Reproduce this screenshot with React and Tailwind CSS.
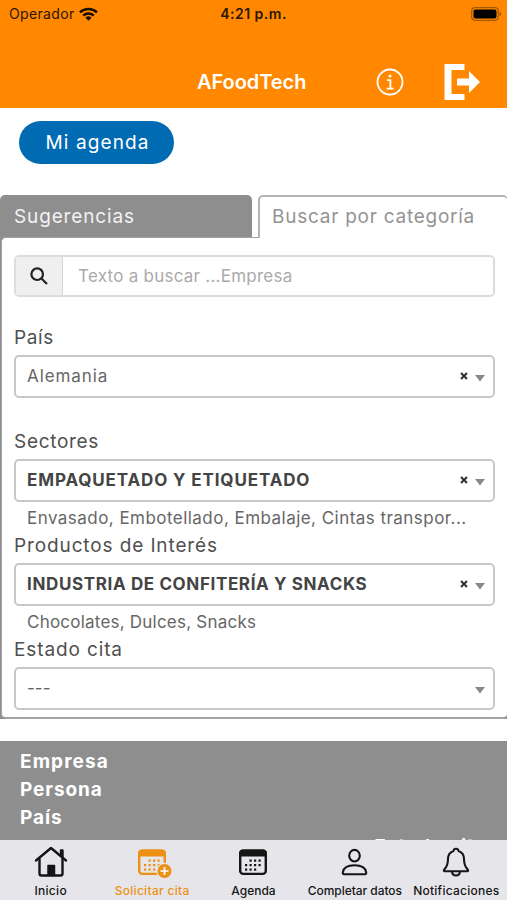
import React, { useState } from 'react';
import clsx from 'clsx';

const HomeIcon = () => (
  <svg width="34" height="32" viewBox="0 0 34 32" fill="none" stroke="currentColor" strokeWidth="2.4" strokeLinecap="round" strokeLinejoin="round">
    <path d="M2 14.5 17 2l15 12.5" />
    <path d="M27 9V4.5h1.500V11" />
    <path d="M5.500 13v14.500a2 2 0 0 0 2 2h19a2 2 0 0 0 2-2V13" />
    <path d="M14 29V19.500h6.500V29z" fill="currentColor" strokeWidth="1.500" />
  </svg>
);

const CalendarIcon = ({ plus }) => (
  <svg className="overflow-visible" width="36" height="32" viewBox="0 0 36 32" fill="none">
    <rect x="5.200" y="4.700" width="25.600" height="23.200" rx="3" stroke="currentColor" strokeWidth="2.400" />
    <path d="M4 10.500V7.500a4 4 0 0 1 4-4h20a4 4 0 0 1 4 4v3z" fill="currentColor" />
    <g fill="currentColor">
      {[14, 18.5, 23].map((y) =>
        [10, 14.5, 19, 23.5].map((x) =>
          (y === 14 && x === 10) || (y === 23 && x === 23.5) ? null : (
            <rect key={`${x}-${y}`} x={x} y={y - 0.5} width="2.200" height="2.200" />
          )
        )
      )}
    </g>
    {plus && (
      <g>
        <circle cx="30.500" cy="25" r="8.200" className="fill-[#e6e5ea]" />
        <circle cx="30.500" cy="25" r="7" fill="currentColor" />
        <path d="M30.500 21v8M26.500 25h8" stroke="#fff" strokeWidth="1.700" />
      </g>
    )}
  </svg>
);

const UserIcon = () => (
  <svg width="28" height="32" viewBox="0 0 28 32" fill="none" stroke="currentColor" strokeWidth="2.100">
    <ellipse cx="13.500" cy="9.700" rx="5.300" ry="5.800" />
    <path d="M3.500 28.300c-1.200 0-1.900-.8-1.700-2C2.500 22 7 19.300 13.500 19.300S24.500 22 25.200 26.300c.2 1.200-.5 2-1.700 2z" />
  </svg>
);

const BellIcon = () => (
  <svg width="30" height="32" viewBox="0 0 30 32" fill="none" stroke="currentColor" strokeWidth="2.100" strokeLinejoin="round">
    <path d="M15 2.800c-1.500 0-2.300.8-2.500 2.100C8.800 6.200 7 9.200 7 13c0 6-1.200 8-3.700 10.500-.9 1-.4 1.800.7 1.800h22c1.100 0 1.600-.8.700-1.800C24.200 21 23 19 23 13c0-3.800-1.800-6.800-5.500-8.100-.2-1.300-1-2.100-2.500-2.100z" />
    <path d="M11 25.500c.2 2.500 1.800 4 4 4s3.800-1.500 4-4" />
  </svg>
);

const NAV_ITEMS = [
  { id: 'inicio', label: 'Inicio', icon: <HomeIcon />, labelClass: 'tracking-[0.3px]' },
  { id: 'solicitar', label: 'Solicitar cita', icon: <CalendarIcon plus />, labelClass: 'tracking-[0.3px]' },
  { id: 'agenda', label: 'Agenda', icon: <CalendarIcon /> },
  { id: 'datos', label: 'Completar datos', icon: <UserIcon />, labelClass: 'tracking-[-0.05px]' },
  { id: 'notificaciones', label: 'Notificaciones', icon: <BellIcon />, labelClass: 'tracking-[0.25px]' },
];

const StatusBar = () => (
  <div className="grid h-7 grid-cols-3 items-center px-[9px] text-sm text-[#2b1700]">
    <div className="flex items-center gap-1">
      <span className="tracking-[0.35px]">Operador</span>
      <svg width="19" height="14" viewBox="0 0 19 14" fill="none" stroke="#1a0e00" strokeWidth="2.500">
        <path d="M1 5.300a12.300 12.300 0 0 1 17 0" />
        <path d="M4.200 8.600a7.700 7.700 0 0 1 10.600 0" />
        <path d="M9.500 13.800 6.500 10.800a4.300 4.300 0 0 1 6 0z" fill="#1a0e00" stroke="none" />
      </svg>
    </div>
    <span className="text-center font-semibold tracking-[0.5px]">4:21 p.m.</span>
    <div className="-mr-1 flex justify-end">
      <svg width="31" height="14" viewBox="0 0 31 14">
        <rect x="0.700" y="0.700" width="26.600" height="12.600" rx="3.500" fill="none" stroke="#a35700" strokeWidth="1.200" />
        <rect x="2.500" y="2.500" width="23" height="9" rx="2" fill="#000" />
        <path d="M28.600 4.800v4.400q1.600-.5 1.600-2.200t-1.600-2.200z" fill="#a35700" />
      </svg>
    </div>
  </div>
);

const Header = () => (
  <header className="h-[108px] shrink-0 bg-[#ff8800]">
    <StatusBar />
    <div className="flex h-20 items-center pt-[27px] pl-[197px]">
      <h1 className="w-[179px] text-[20px] font-semibold tracking-[-0.05px] text-white">AFoodTech</h1>
      <svg width="28" height="28" viewBox="0 0 28 28" fill="none" stroke="#fff">
        <circle cx="14" cy="14" r="12.500" strokeWidth="1.800" />
        <circle cx="14" cy="8" r="1.600" fill="#fff" stroke="none" />
        <path d="M11 12.200h3.400v8.300M10.700 20.700h7" strokeWidth="1.800" />
      </svg>
      <svg className="ml-10" width="37" height="36" viewBox="0 0 37 36" fill="#fff">
        <path d="M.5 0h20v6h-13v24h13v6h-20z" />
        <path d="M13 14.500h12V7l11 11L25 29v-7.500H13z" />
      </svg>
    </div>
  </header>
);

const SelectField = ({ label, labelClass, value, valueClass, detail, detailClass, clearable = true }) => (
  <div className="flex flex-col">
    <label className={clsx('mb-1 h-7 text-[19px] leading-[30px] text-[#505050]', labelClass)}>{label}</label>
    <div className="flex h-[43px] items-center rounded-[5px] border-2 border-[#c8c8c8] bg-white pr-2 pl-[11px]">
      <span className={clsx('flex-1 whitespace-nowrap', valueClass)}>{value}</span>
      {clearable && (
        <svg className="mr-[7px] mb-0.5" width="8" height="8" viewBox="0 0 8 8" stroke="#333" strokeWidth="2.100">
          <path d="m1 1 6 6M7 1 1 7" />
        </svg>
      )}
      <svg className="mt-1" width="10" height="7" viewBox="0 0 10 7" fill="#888">
        <path d="M0 0h10L5 6.500z" />
      </svg>
    </div>
    {detail !== undefined && (
      <p className={clsx('h-[29px] pl-[13px] text-[17px] leading-[32px] whitespace-nowrap text-[#666]', detailClass)}>
        {detail}
      </p>
    )}
  </div>
);

const BottomNav = ({ active, onChange }) => (
  <nav className="grid h-[60px] shrink-0 grid-cols-5 bg-[#e6e5ea]">
    {NAV_ITEMS.map((item) => (
      <button
        key={item.id}
        onClick={() => onChange(item.id)}
        className={clsx(
          'flex flex-col items-center pt-1.5 text-xs font-medium whitespace-nowrap',
          active === item.id ? 'text-[#ed9116]' : 'text-[#151515]'
        )}
      >
        {item.icon}
        <span className={clsx('mt-[5px] leading-4', item.labelClass)}>{item.label}</span>
      </button>
    ))}
  </nav>
);

const App = () => {
  const [active, setActive] = useState('solicitar');
  const [query, setQuery] = useState('');

  return (
    <div className="flex h-[900px] w-[507px] flex-col overflow-hidden bg-white font-['Inter',sans-serif]">
      <Header />

      <main className="flex h-[732px] flex-col overflow-hidden">
        <button className="mt-[13px] ml-[19px] h-[43px] w-[155px] shrink-0 rounded-full bg-[#006ab3] pt-0.5 pl-0.5 text-[19px] tracking-[1.1px] text-white">
          Mi agenda
        </button>

        {/* Tabs */}
        <div className="mt-[31px] flex h-[43px] shrink-0 justify-between">
          <button className="h-[43px] w-[252px] rounded-t-[5px] bg-[#8e8e8e] pt-0.5 pl-3.5 text-left text-[19px] tracking-[0.85px] text-[#f2f2f2]">
            Sugerencias
          </button>
          <button className="relative z-10 -mr-px h-[43px] w-[250px] rounded-t-[5px] border-2 border-r border-b-0 border-[#b4b4b4] bg-white pl-3 text-left text-[19px] tracking-[0.75px] text-[#939393]">
            Buscar por categoría
          </button>
        </div>

        {/* Search filters */}
        <section className="-mt-px -mr-px h-[482px] shrink-0 bg-[#8e8e8e] pl-px">
          <div className="h-full rounded-l-[5px] rounded-br-[5px] border border-b-2 border-[#a3a3a3] bg-white pr-3 pl-3">
            <div className="flex h-[59px] pt-[17px]">
              <div className="flex h-[42px] w-full overflow-hidden rounded-[5px] border-2 border-[#dcdcdc]">
                <span className="flex w-[47px] shrink-0 items-center justify-center border-r border-[#d5d5d5] bg-[#efefef]">
                  <svg width="18" height="18" viewBox="0 0 18 18" fill="none" stroke="#222" strokeWidth="2.200">
                    <circle cx="7.200" cy="7.200" r="5.800" />
                    <path d="m11.500 11.500 5.500 5.500" />
                  </svg>
                </span>
                <input
                  value={query}
                  onChange={(e) => setQuery(e.target.value)}
                  placeholder="Texto a buscar ...Empresa"
                  className="min-w-0 flex-1 px-[15px] pt-0.5 text-[17px] tracking-[0.25px] outline-none placeholder:text-[#aaa]"
                />
              </div>
            </div>

            <div className="pt-[26px]">
              <SelectField
                label="País"
                labelClass="tracking-[0.6px]"
                value="Alemania"
                valueClass="text-[17px] tracking-[0.9px] text-[#666]"
                detail=""
              />
              <SelectField
                label="Sectores"
                labelClass="tracking-[0.7px]"
                value="EMPAQUETADO Y ETIQUETADO"
                valueClass="text-[17px] font-bold tracking-[0.87px] text-[#444]"
                detail="Envasado, Embotellado, Embalaje, Cintas transpor..."
                detailClass="tracking-[0.46px]"
              />
              <SelectField
                label="Productos de Interés"
                labelClass="tracking-[0.88px]"
                value="INDUSTRIA DE CONFITERÍA Y SNACKS"
                valueClass="text-[17px] font-bold tracking-[0.63px] text-[#444]"
                detail="Chocolates, Dulces, Snacks"
                detailClass="tracking-[0.22px]"
              />
              <SelectField
                label="Estado cita"
                labelClass="tracking-[0.88px]"
                value="---"
                valueClass="text-[17px] text-[#666]"
                clearable={false}
              />
            </div>
          </div>
        </section>

        {/* Results header */}
        <section className="mt-[22px] h-[120px] shrink-0 bg-[#8e8e8e] px-5 pt-[7px] text-[19px] leading-7 font-bold text-white">
          <p className="tracking-[1.1px]">Empresa</p>
          <p className="tracking-[0.9px]">Persona</p>
          <p className="tracking-[0.9px]">País</p>
          <p className="pt-px text-right tracking-[0.9px]">Estado cita</p>
        </section>
      </main>

      <BottomNav active={active} onChange={setActive} />
    </div>
  );
};

export default App;
